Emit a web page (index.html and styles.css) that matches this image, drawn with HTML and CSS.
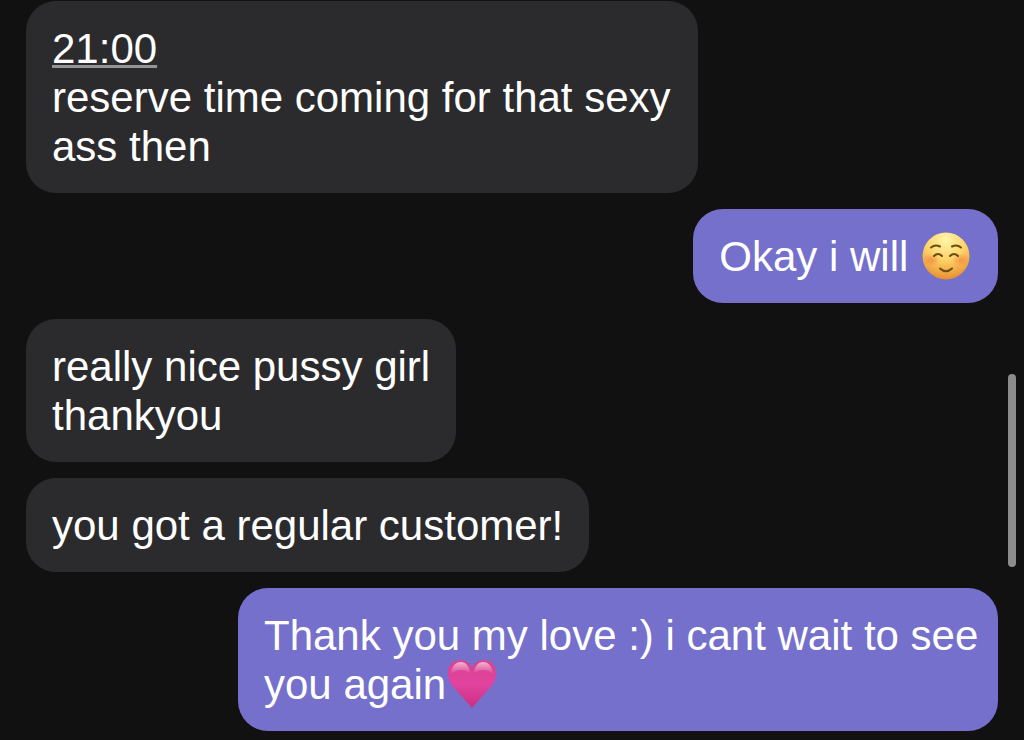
FILE: index.html
```
<!DOCTYPE html>
<html lang="en">
<head>
  <meta charset="UTF-8">
  <meta name="viewport" content="width=device-width, initial-scale=1">
  <title>Messages</title>
  <link rel="stylesheet" href="styles.css">
</head>
<body>
  <main class="chat">
    <div class="message received">
      <a class="time-link" href="#">21:00</a><br>
      reserve time coming for that sexy ass then
    </div>

    <div class="message sent">
      Okay i will
      <svg class="emoji" viewBox="0 0 48 48" role="img" aria-label="smiling face">
        <defs>
          <radialGradient id="face" cx="50%" cy="15%" r="88%">
            <stop offset="0" stop-color="#fff6a8"/>
            <stop offset="0.5" stop-color="#fdd268"/>
            <stop offset="1" stop-color="#e58a2c"/>
          </radialGradient>
          <radialGradient id="blush">
            <stop offset="0" stop-color="#f4783c" stop-opacity="0.6"/>
            <stop offset="1" stop-color="#f4783c" stop-opacity="0"/>
          </radialGradient>
        </defs>
        <circle cx="24" cy="24" r="23.5" fill="url(#face)"/>
        <ellipse cx="9" cy="28" rx="9" ry="7" fill="url(#blush)"/>
        <ellipse cx="39" cy="28" rx="9" ry="7" fill="url(#blush)"/>
        <g fill="none" stroke="#6b4c12" stroke-width="2" stroke-linecap="round">
          <path d="M9 15.500Q13 12 18 14.500"/>
          <path d="M30 14.500Q35 12 39 15.500"/>
          <path d="M12 24Q16 20 20 24"/>
          <path d="M28 24Q32 20 36 24"/>
          <path d="M18 36.500Q24 42 30 36.500"/>
        </g>
      </svg>
    </div>

    <div class="message received">really nice pussy girl<br>thankyou</div>

    <div class="message received">you got a regular customer!</div>

    <div class="message sent">
      Thank you my love :) i cant wait to see you again<svg class="emoji" viewBox="0 0 48 48" role="img" aria-label="pink heart">
        <defs>
          <linearGradient id="pink" x1="0" y1="0" x2="0" y2="1">
            <stop offset="0" stop-color="#d8438f"/>
            <stop offset="0.5" stop-color="#e2439f"/>
            <stop offset="1" stop-color="#ca2f80"/>
          </linearGradient>
          <linearGradient id="shine" x1="0" y1="0" x2="0" y2="1">
            <stop offset="0" stop-color="#fff" stop-opacity="0.6"/>
            <stop offset="1" stop-color="#fff" stop-opacity="0"/>
          </linearGradient>
        </defs>
        <path d="M24 48C21 44 15 38 9 31C3 25 0 20 0 13C0 5 5 0 12 0C18 0 22 3 24 8C26 3 30 0 36 0C43 0 48 5 48 13C48 20 45 25 39 31C33 38 27 44 24 48Z" fill="url(#pink)"/>
        <path d="M3 14C4 5 8 2 13 2C18 2 21 6 22 13C16 9 9 9 3 14ZM45 14C44 5 40 2 35 2C30 2 27 6 26 13C32 9 39 9 45 14Z" fill="url(#shine)"/>
      </svg>
    </div>
  </main>
  <div class="scroll-thumb"></div>
</body>
</html>
```

FILE: styles.css
```
body {
  margin: 0;
  background: #111;
  color: white;
  font-family: "Liberation Sans", Arial, sans-serif;
  font-size: 42px;
  line-height: 49px;
}

.chat {
  display: flex;
  flex-direction: column;
  align-items: flex-start;
  gap: 16px;
  padding: 1px 26px 10px;
}

.message {
  box-sizing: border-box;
  padding: 23px 26px 22px;
  border-radius: 30px;
}

.received {
  max-width: 672px;
  background: #2b2b2d;
}

.sent {
  align-self: flex-end;
  max-width: 760px;
  padding-right: 18px;
  background: #7570cb;
}

.time-link {
  color: inherit;
  text-decoration: underline;
  text-decoration-color: #949496;
  text-decoration-thickness: 3px;
}

.emoji {
  width: 48px;
  height: 48px;
  margin: -10px 10px -2px 2px;
  vertical-align: middle;
}

.scroll-thumb {
  position: fixed;
  top: 374px;
  right: 8px;
  width: 8px;
  height: 193px;
  border-radius: 4px;
  background: #8c8c8c;
}
```
